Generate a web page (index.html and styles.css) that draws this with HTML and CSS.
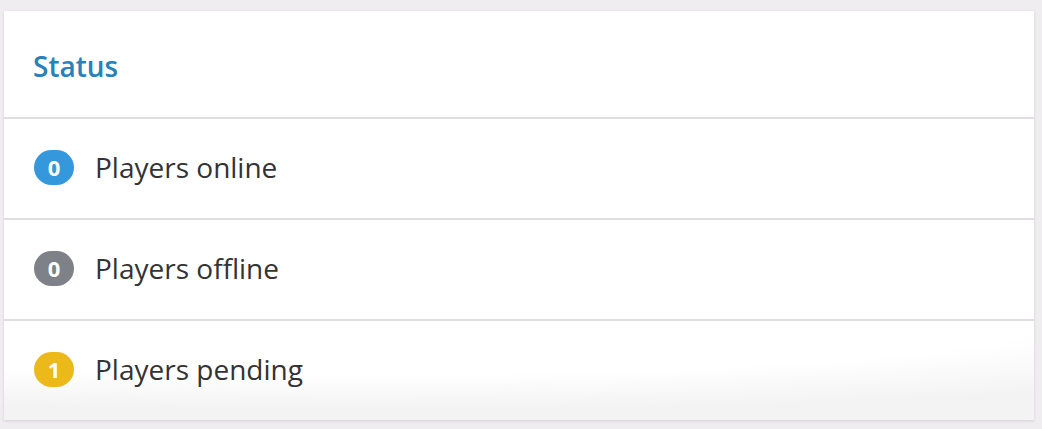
FILE: index.html
```html
<!DOCTYPE html>
<html lang="en">
<head>
  <meta charset="UTF-8">
  <title>Status</title>
  <link rel="stylesheet" href="styles.css">
</head>
<body>
  <div class="panel">
    <div class="panel-heading">
      <h3 class="panel-title">Status</h3>
    </div>
    <ul class="status-list">
      <li class="status-item">
        <span class="badge badge-online">0</span>
        <span class="status-label">Players online</span>
      </li>
      <li class="status-item">
        <span class="badge badge-offline">0</span>
        <span class="status-label">Players offline</span>
      </li>
      <li class="status-item status-item-last">
        <span class="badge badge-pending">1</span>
        <span class="status-label">Players pending</span>
      </li>
    </ul>
  </div>
</body>
</html>
```

FILE: styles.css
```css
body {
  margin: 0;
  padding: 11px 8px 9px 4px;
  background-color: #efedf0;
  font-family: 'Open Sans', 'Noto Sans', sans-serif;
  color: #333;
}

.panel {
  background: #fff;
  box-shadow: 0 1px 3px rgba(0, 0, 0, 0.12);
}

.panel-heading {
  height: 106px;
  padding-left: 29px;
  display: flex;
  align-items: center;
  border-bottom: 2px solid #dedede;
}

.panel-title {
  margin: 3px 0 0;
  font-size: 28px;
  font-weight: 600;
  color: #2a80b9;
  line-height: 1;
}

.status-list {
  list-style: none;
  margin: 0;
  padding: 0;
}

.status-item {
  height: 99px;
  padding-left: 30px;
  display: flex;
  align-items: center;
  border-bottom: 2px solid #dedede;
}

.status-item-last {
  border-bottom: none;
  background: radial-gradient(ellipse 110% 90% at 35% 0%, #fff 60%, #f3f3f3 100%);
}

.badge {
  width: 40px;
  height: 35px;
  border-radius: 18px;
  display: flex;
  align-items: center;
  justify-content: center;
  color: #fff;
  font-size: 22px;
  font-weight: 700;
  line-height: 1;
  margin-right: 21px;
  margin-top: -3px;
}

.badge-online {
  background-color: #3598dc;
}

.badge-offline {
  background-color: #7f8188;
}

.badge-pending {
  background-color: #ebb919;
}

.status-label {
  font-size: 28px;
  line-height: 1;
  margin-top: -3px;
}
```
